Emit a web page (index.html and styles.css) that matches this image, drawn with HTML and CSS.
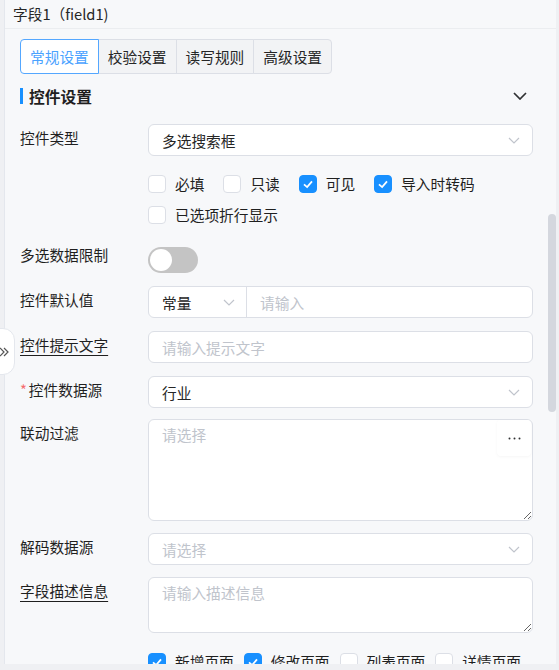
FILE: index.html
```html
<!DOCTYPE html>
<html lang="zh-CN">
<head>
  <meta charset="UTF-8">
  <meta name="viewport" content="width=device-width, initial-scale=1.0">
  <title>字段设置</title>
  <link rel="stylesheet" href="styles.css">
</head>
<body>
  <div class="page">
    <div class="panel">
      <div class="panel-head">字段1（field1)</div>

      <div class="panel-body">
        <div class="tabs">
          <div class="tab active">常规设置</div>
          <div class="tab">校验设置</div>
          <div class="tab">读写规则</div>
          <div class="tab">高级设置</div>
        </div>

        <div class="section-title">
          <span class="bar"></span>控件设置
          <svg class="fold" width="14" height="8" viewBox="0 0 14 8"><polyline points="1,1 7,7 13,1"/></svg>
        </div>

        <div class="form-item first">
          <label class="item-label">控件类型</label>
          <div class="item-control">
            <div class="select">
              <span class="value">多选搜索框</span>
              <svg class="arrow" width="12" height="7" viewBox="0 0 12 7"><polyline points="1,1 6,6 11,1"/></svg>
            </div>
            <div class="check-group">
              <div class="check-row">
                <span class="check"><span class="box"></span>必填</span>
                <span class="check"><span class="box"></span>只读</span>
                <span class="check"><span class="box on"><svg viewBox="0 0 18 18"><polyline points="4.5,9.5 8,12.5 13.5,6"/></svg></span>可见</span>
                <span class="check"><span class="box on"><svg viewBox="0 0 18 18"><polyline points="4.5,9.5 8,12.5 13.5,6"/></svg></span>导入时转码</span>
              </div>
              <div class="check-row">
                <span class="check"><span class="box"></span>已选项折行显示</span>
              </div>
            </div>
          </div>
        </div>

        <div class="form-item switch-item">
          <label class="item-label">多选数据限制</label>
          <div class="item-control">
            <span class="switch"></span>
          </div>
        </div>

        <div class="form-item">
          <label class="item-label">控件默认值</label>
          <div class="item-control">
            <div class="combo">
              <div class="combo-select">
                <span class="value">常量</span>
                <svg class="arrow" width="12" height="7" viewBox="0 0 12 7"><polyline points="1,1 6,6 11,1"/></svg>
              </div>
              <input class="combo-input" type="text" placeholder="请输入">
            </div>
          </div>
        </div>

        <div class="form-item">
          <label class="item-label"><span class="tip">控件提示文字</span></label>
          <div class="item-control">
            <input class="input" type="text" placeholder="请输入提示文字">
          </div>
        </div>

        <div class="form-item">
          <label class="item-label"><span class="required">*</span>控件数据源</label>
          <div class="item-control">
            <div class="select">
              <span class="value">行业</span>
              <svg class="arrow" width="12" height="7" viewBox="0 0 12 7"><polyline points="1,1 6,6 11,1"/></svg>
            </div>
          </div>
        </div>

        <div class="form-item tight">
          <label class="item-label">联动过滤</label>
          <div class="item-control with-more">
            <textarea class="textarea tall" placeholder="请选择"></textarea>
            <span class="more-btn">
              <svg width="13" height="3" viewBox="0 0 13 3"><circle cx="1.5" cy="1.5" r="1"/><circle cx="6.5" cy="1.5" r="1"/><circle cx="11.5" cy="1.5" r="1"/></svg>
            </span>
          </div>
        </div>

        <div class="form-item near">
          <label class="item-label">解码数据源</label>
          <div class="item-control">
            <div class="select">
              <span class="placeholder">请选择</span>
              <svg class="arrow" width="12" height="7" viewBox="0 0 12 7"><polyline points="1,1 6,6 11,1"/></svg>
            </div>
          </div>
        </div>

        <div class="form-item near">
          <label class="item-label"><span class="tip">字段描述信息</span></label>
          <div class="item-control">
            <textarea class="textarea short" placeholder="请输入描述信息"></textarea>
          </div>
        </div>

        <div class="form-item">
          <label class="item-label"></label>
          <div class="item-control">
            <div class="check-row compact">
              <span class="check"><span class="box on"><svg viewBox="0 0 18 18"><polyline points="4.5,9.5 8,12.5 13.5,6"/></svg></span>新增页面</span>
              <span class="check"><span class="box on"><svg viewBox="0 0 18 18"><polyline points="4.5,9.5 8,12.5 13.5,6"/></svg></span>修改页面</span>
              <span class="check"><span class="box"></span>列表页面</span>
              <span class="check"><span class="box"></span>详情页面</span>
            </div>
          </div>
        </div>
      </div>

      <div class="scroll-thumb"></div>
    </div>

    <!-- collapse handle sitting on the panel's left edge -->
    <div class="side-toggle">
      <svg width="10" height="10" viewBox="0 0 10 10"><polyline points="1,1 5,5 1,9"/><polyline points="5,1 9,5 5,9"/></svg>
    </div>
  </div>
</body>
</html>
```

FILE: styles.css
```css
body {
  margin: 0;
  background-color: #eff0f3;
  font-family: "Noto Sans CJK SC", "Noto Sans", sans-serif;
  font-size: 14.7px;
  color: #1f1f1f;
}
.page {
  position: relative;
  width: 559px;
  height: 670px;
  overflow: hidden;
}
.panel {
  position: relative;
  margin-left: 4px;
  width: 551px;
  height: 664px;
  border-left: 1px solid #e4e7ed;
  background-color: #f7f8fa;
  overflow: hidden;
}
.panel-head {
  height: 28px;
  line-height: 28px;
  padding-left: 8px;
  border-bottom: 1px solid #ebedf0;
  color: #262626;
}
.panel-body {
  padding: 0 23px 0 15px;
}

/* tabs */
.tabs {
  display: flex;
  margin-top: 10px;
}
.tab {
  height: 33px;
  line-height: 33px;
  padding: 0 9px;
  border: 1px solid #dcdfe6;
  background-color: #f2f3f5;
  color: #262626;
}
.tab + .tab {
  margin-left: -1px;
}
.tab:first-child {
  border-radius: 4px 0 0 4px;
}
.tab:last-child {
  border-radius: 0 4px 4px 0;
}
.tab.active {
  position: relative;
  z-index: 1;
  background-color: #fff;
  border-color: #54a7ff;
  color: #4aa2ff;
}

/* section header */
.section-title {
  display: flex;
  align-items: center;
  height: 16px;
  margin-top: 14px;
  font-size: 15.75px;
  font-weight: bold;
  color: #1f1f1f;
}
.section-title .bar {
  width: 3px;
  height: 16px;
  margin-right: 6px;
  background-color: #1890ff;
}
.fold {
  margin-left: auto;
  margin-right: 6px;
  fill: none;
  stroke: #303133;
  stroke-width: 1.7;
}

/* form rows */
.form-item {
  display: flex;
  margin-top: 13px;
}
.form-item.first {
  margin-top: 20px;
}
.form-item.switch-item {
  margin-top: 11px;
}
.form-item.tight {
  margin-top: 11px;
}
.form-item.near {
  margin-top: 12px;
}
.item-label {
  flex-shrink: 0;
  width: 128px;
  line-height: 27px;
  color: #1f1f1f;
}
.item-control {
  flex: 1;
  min-width: 0;
}
.tip {
  text-decoration: underline;
  text-underline-offset: 4px;
}
.required {
  color: #f56c6c;
  margin-right: 2px;
}

.select,
.input,
.combo {
  box-sizing: border-box;
  height: 32px;
  border: 1px solid #dcdfe6;
  border-radius: 6px;
  background-color: #fff;
}
.select {
  display: flex;
  align-items: center;
  justify-content: space-between;
  padding: 0 12px 0 13px;
}
.value {
  color: #262626;
}
.placeholder {
  color: #c0c4cc;
}
.arrow {
  fill: none;
  stroke: #c0c4cc;
  stroke-width: 1.2;
}
.input {
  display: block;
  width: 100%;
  padding: 0 13px;
  font: inherit;
  color: #262626;
  outline: none;
}
.input::placeholder,
.combo-input::placeholder,
.textarea::placeholder {
  color: #c0c4cc;
}

.combo {
  display: flex;
}
.combo-select {
  display: flex;
  align-items: center;
  justify-content: space-between;
  box-sizing: border-box;
  width: 98px;
  padding: 0 11px 0 13px;
  border-right: 1px solid #dcdfe6;
}
.combo-input {
  flex: 1;
  min-width: 0;
  border: none;
  background: transparent;
  padding: 0 13px;
  font: inherit;
  outline: none;
}

.textarea {
  display: block;
  box-sizing: border-box;
  width: 100%;
  padding: 4px 13px;
  border: 1px solid #dcdfe6;
  border-radius: 6px;
  background-color: #fff;
  font: inherit;
  line-height: 22px;
  resize: vertical;
  outline: none;
}
.textarea.tall {
  height: 102px;
}
.textarea.short {
  height: 56px;
}
.with-more {
  position: relative;
}
.more-btn {
  position: absolute;
  top: 1px;
  right: 2px;
  width: 34px;
  height: 36px;
  display: flex;
  align-items: center;
  justify-content: center;
  background-color: #fff;
  border-radius: 4px;
  box-shadow: 0 1px 3px rgba(0, 0, 0, 0.04);
}
.more-btn svg {
  fill: #303133;
}

/* checkboxes */
.check-group {
  margin-top: 12px;
}
.check-row {
  display: flex;
  align-items: center;
  height: 31px;
}
.check {
  display: inline-flex;
  align-items: center;
  margin-right: 19px;
  color: #1f1f1f;
}
.check-row.compact .check {
  margin-right: 10px;
}
.box {
  box-sizing: border-box;
  width: 18px;
  height: 18px;
  margin-right: 9px;
  border: 1px solid #dcdfe6;
  border-radius: 4px;
  background-color: #fff;
}
.box svg {
  display: block;
  width: 16px;
  height: 16px;
  fill: none;
  stroke: #fff;
  stroke-width: 2;
}
.box.on {
  background-color: #1890ff;
  border-color: #1890ff;
}

/* switch */
.switch {
  position: relative;
  display: block;
  width: 50px;
  height: 26px;
  margin-top: 6px;
  border-radius: 13px;
  background-color: #c4c4c4;
}
.switch::after {
  content: "";
  position: absolute;
  top: 2px;
  left: 2px;
  width: 22px;
  height: 22px;
  border-radius: 50%;
  background-color: #fff;
}

.scroll-thumb {
  position: absolute;
  top: 214px;
  right: 0;
  width: 8px;
  height: 198px;
  border-radius: 4px;
  background-color: #d4d7de;
}

.side-toggle {
  position: absolute;
  top: 328px;
  left: -12px;
  box-sizing: border-box;
  width: 27px;
  height: 47px;
  display: flex;
  align-items: center;
  justify-content: flex-end;
  padding-right: 5px;
  border: 1px solid #e4e7ed;
  border-radius: 0 12px 12px 0;
  background-color: #fff;
}
.side-toggle svg {
  fill: none;
  stroke: #555;
  stroke-width: 1.2;
}
```
